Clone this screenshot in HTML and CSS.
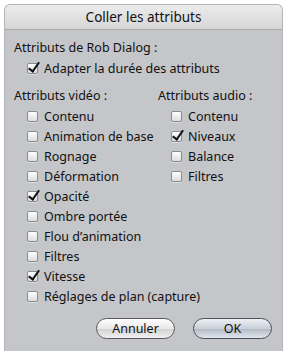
FILE: index.html
```html
<!DOCTYPE html>
<html lang="fr">
<head>
  <meta charset="UTF-8" />
  <title>Coller les attributs</title>
  <link rel="stylesheet" href="styles.css">
</head>
<body>
  <div class="dialog">
    <div class="titlebar">Coller les attributs</div>
    <div class="content">
      <div class="heading">Attributs de Rob Dialog :</div>
      <label class="check on indent"><span class="box"></span>Adapter la durée des attributs</label>

      <div class="columns">
        <div class="col video">
          <div class="heading">Attributs vidéo :</div>
          <label class="check"><span class="box"></span>Contenu</label>
          <label class="check"><span class="box"></span>Animation de base</label>
          <label class="check"><span class="box"></span>Rognage</label>
          <label class="check"><span class="box"></span>Déformation</label>
          <label class="check on"><span class="box"></span>Opacité</label>
          <label class="check"><span class="box"></span>Ombre portée</label>
          <label class="check"><span class="box"></span>Flou d’animation</label>
          <label class="check"><span class="box"></span>Filtres</label>
          <label class="check on"><span class="box"></span>Vitesse</label>
          <label class="check"><span class="box"></span>Réglages de plan (capture)</label>
        </div>
        <div class="col audio">
          <div class="heading">Attributs audio :</div>
          <label class="check"><span class="box"></span>Contenu</label>
          <label class="check on"><span class="box"></span>Niveaux</label>
          <label class="check"><span class="box"></span>Balance</label>
          <label class="check"><span class="box"></span>Filtres</label>
        </div>
      </div>

      <div class="buttons">
        <button class="btn">Annuler</button>
        <button class="btn default">OK</button>
      </div>
    </div>
  </div>
</body>
</html>
```

FILE: styles.css
```css
* {
  box-sizing: border-box;
}
body {
  margin: 0;
  padding: 4px 4px 0 4px;
  background: #ffffff;
  font-family: 'Noto Sans', 'DejaVu Sans', sans-serif;
  font-size: 12.5px;
  color: #111;
}
.dialog {
  width: 279px;
  height: 347px;
  background: #c5c6c9;
  border-radius: 6px 6px 0 0;
  border: 1px solid #b4b4b6;
  border-bottom: none;
  overflow: hidden;
}
.titlebar {
  height: 25px;
  line-height: 24px;
  text-align: center;
  font-size: 13.5px;
  background: linear-gradient(#ececec, #d6d6d6);
  border-bottom: 1px solid #a9a9ab;
  color: #111;
}
.content {
  padding: 8px 0 0 9px;
}
.heading {
  height: 20px;
  line-height: 20px;
  white-space: nowrap;
}
.check {
  display: flex;
  align-items: center;
  height: 20px;
  padding-left: 13px;
  white-space: nowrap;
}
.check.indent {
  margin-bottom: 8px;
}
.box {
  flex: none;
  width: 11px;
  height: 11px;
  margin-right: 6px;
  border: 1px solid #8a8a8c;
  border-radius: 2px;
  background: linear-gradient(#ffffff, #dcdcdc);
  box-shadow: 0 1px 0 rgba(255,255,255,0.4);
  position: relative;
}
.check.on .box::after {
  content: "";
  position: absolute;
  left: 3px;
  top: -4px;
  width: 4px;
  height: 10px;
  border-right: 2px solid #111;
  border-bottom: 2px solid #111;
  transform: rotate(35deg);
}
.columns {
  display: flex;
}
.video {
  width: 144px;
}
.buttons {
  display: flex;
  justify-content: flex-end;
  gap: 18px;
  padding: 12px 10px 0 0;
}
.btn {
  width: 79px;
  height: 21px;
  border-radius: 11px;
  border: 1px solid #5a5a5c;
  background: linear-gradient(#ffffff 0%, #e8e8e8 50%, #d4d4d4 55%, #f0f0f0 100%);
  font-family: 'Noto Sans', 'DejaVu Sans', sans-serif;
  font-size: 12.5px;
  color: #111;
  padding: 0;
}
.btn.default {
  border-color: #4a5058;
  background: linear-gradient(#eef1f5 0%, #c9d0d9 50%, #b4bcc7 55%, #e2e7ed 100%);
}
```
